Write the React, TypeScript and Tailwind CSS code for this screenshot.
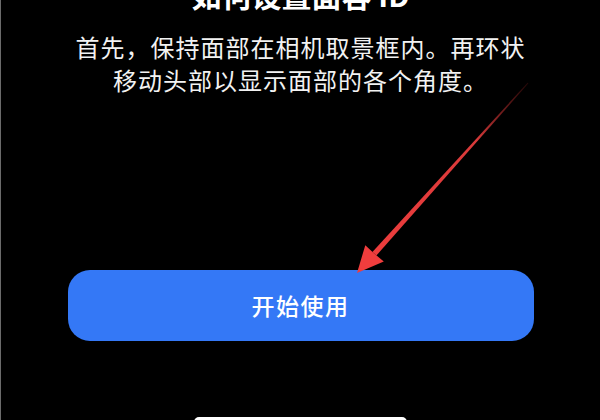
const cjk = { fontFamily: '"Noto Sans CJK SC", "Noto Sans", sans-serif' };

// Red pointer arrow drawn over the screen
function Pointer() {
  return (
    <svg
      className="pointer-events-none absolute left-0 top-0"
      width={600}
      height={420}
      viewBox="0 0 600 420"
    >
      <defs>
        <linearGradient id="shaft" x1="527" y1="83" x2="356" y2="273" gradientUnits="userSpaceOnUse">
          <stop offset="0" stopColor="#7a1a1a" stopOpacity="0.3" />
          <stop offset="0.3" stopColor="#d93a3a" />
          <stop offset="1" stopColor="#f03d3d" />
        </linearGradient>
      </defs>
      <polygon
        points="527.4,83.3 375.4,255.6 371.4,252.0 526.6,82.7"
        fill="url(#shaft)"
      />
      <polygon points="356,273 382.8,261.5 373.4,253.7 364.3,245.2" fill="#f03d3d" />
    </svg>
  );
}

export default function App() {
  return (
    <div
      className="relative flex h-[420px] w-[600px] flex-col items-center overflow-hidden border-l border-[#6b6b6b] bg-black"
      style={cjk}
    >
      <h1 className="-mt-[24px] text-[30px] font-bold leading-[36px] text-white">如何设置面容 ID</h1>

      <p className="mt-[18px] text-center text-[24px] leading-[33px] tracking-[1px] text-[#f2f2f2]">
        首先，保持面部在相机取景框内。再环状
        <br />
        移动头部以显示面部的各个角度。
      </p>

      <button className="mt-[174px] flex h-[71px] w-[466px] shrink-0 items-center justify-center rounded-[22px] bg-[#3478f6] text-[23px] font-medium tracking-[1.5px] text-white">
        开始使用
      </button>

      <div className="mt-[76px] h-[12px] w-[213px] shrink-0 rounded-[5px] bg-white" />

      <Pointer />
    </div>
  );
}
